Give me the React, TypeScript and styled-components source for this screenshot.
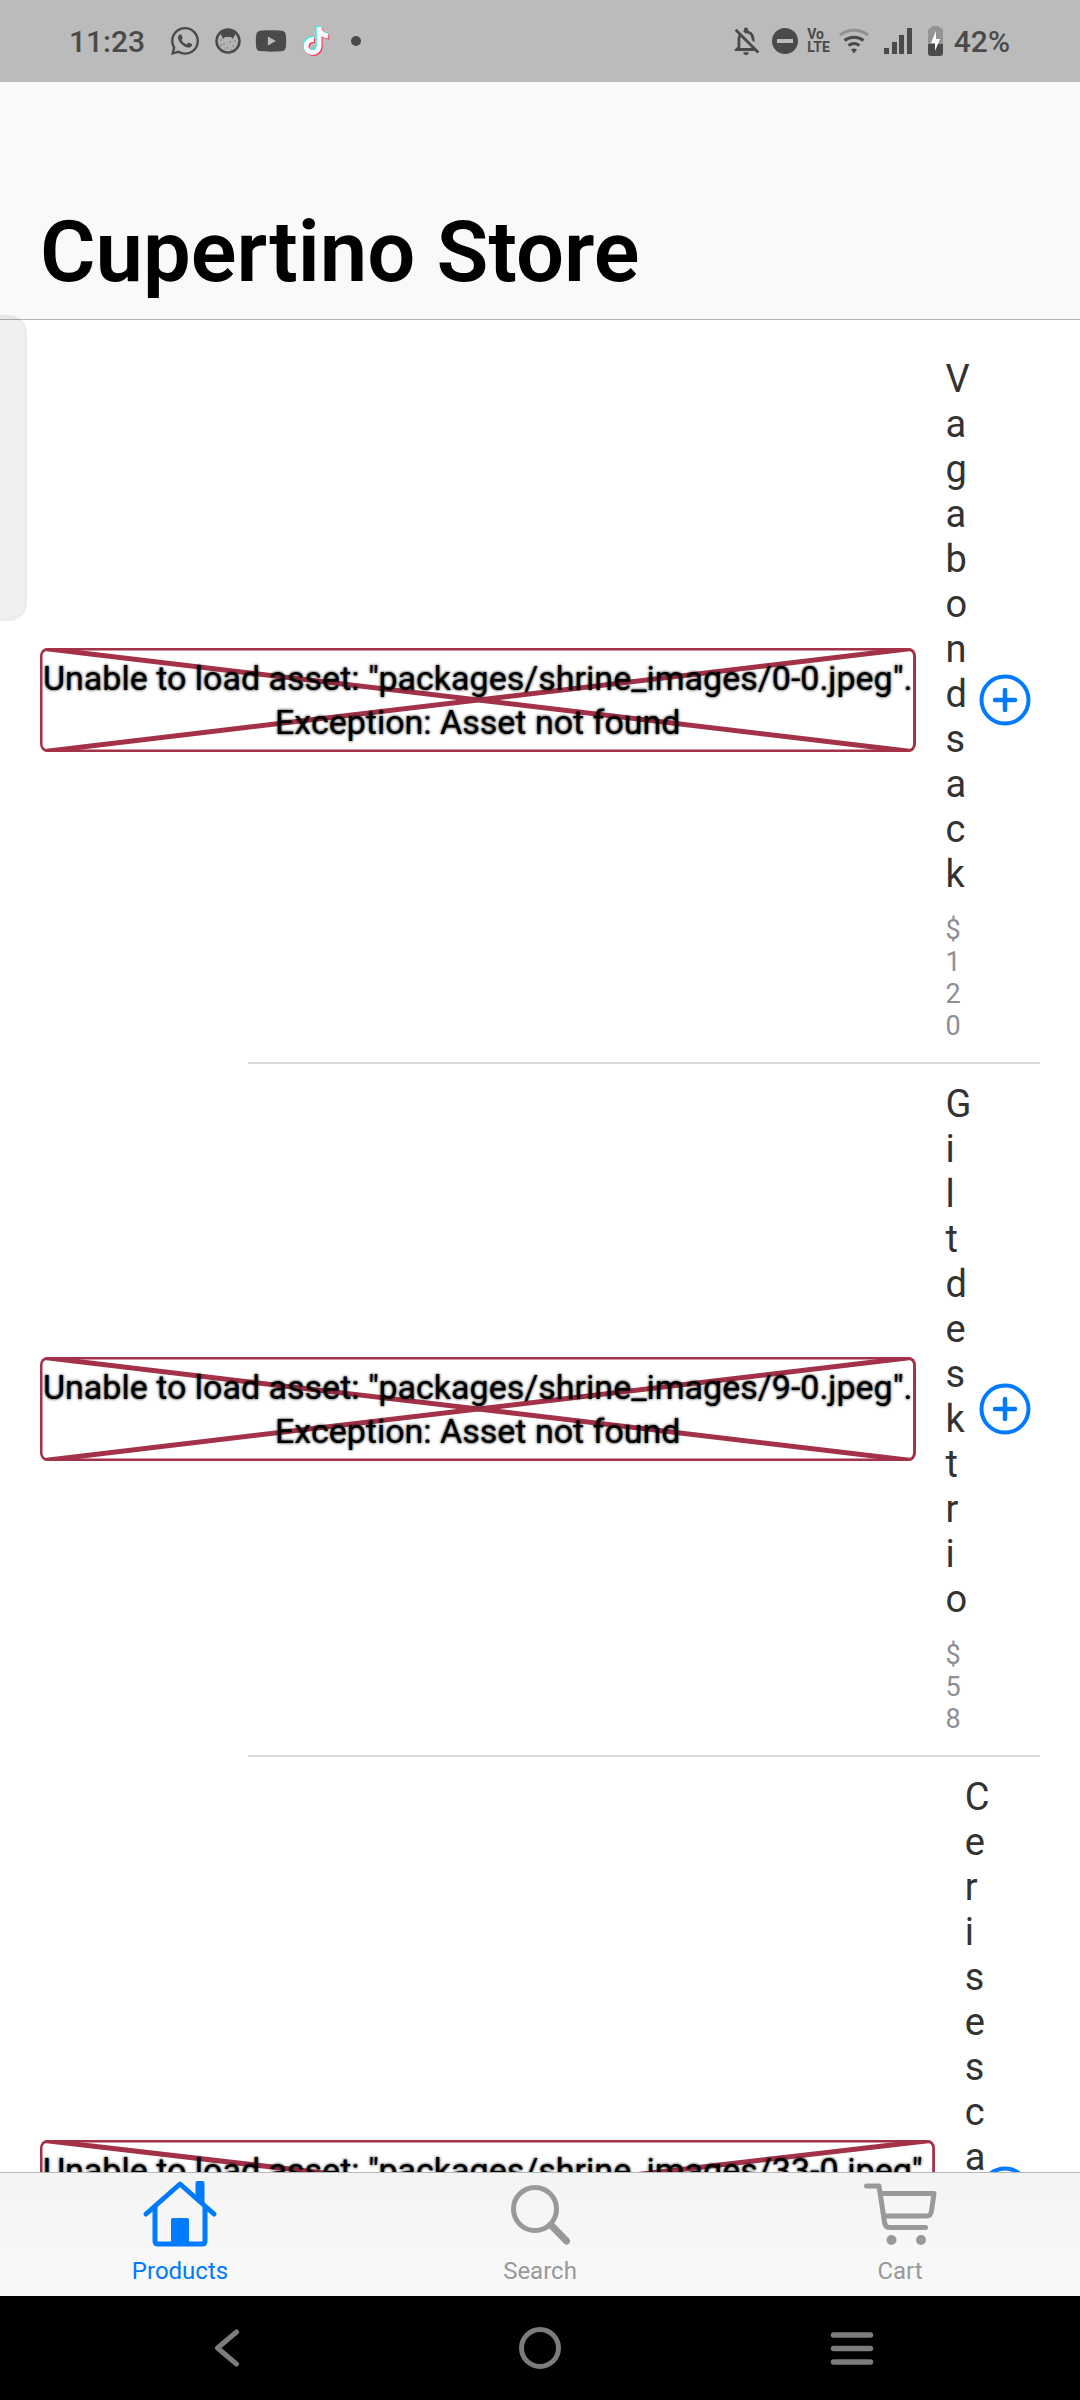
import React from "react";
import styled, { createGlobalStyle } from "styled-components";
import { FaTiktok, FaWhatsapp, FaYoutube } from "react-icons/fa6";
import { MdOutlineNotificationsOff } from "react-icons/md";

const ink = "#4a4a4a";
const blue = "#007aff";
const inactive = "#999999";
const errorRed = "#a33249";

const GlobalStyle = createGlobalStyle`
  * { box-sizing: border-box; }
  body {
    margin: 0;
    background: #ffffff;
    font-family: Roboto, "Noto Sans", sans-serif;
  }
  button {
    border: 0;
    padding: 0;
    background: none;
    font: inherit;
    color: inherit;
  }
  svg { display: block; flex: none; }
`;

const Screen = styled.div`
  position: relative;
  display: flex;
  flex-direction: column;
  height: 100vh;
  overflow: hidden;
`;

const StatusBar = styled.div`
  flex: none;
  display: flex;
  align-items: center;
  justify-content: space-between;
  height: 82px;
  padding: 0 70px 0 69px;
  background: #bbbbbb;
  color: ${ink};
  font-size: 30px;
  font-weight: 500;
`;

const StatusGroup = styled.div<{ $gap: number }>`
  display: flex;
  align-items: center;
  gap: ${(p) => p.$gap}px;
`;

const Clock = styled.span`
  margin-right: 10px;
`;

const Dot = styled.span`
  width: 10px;
  height: 10px;
  margin-left: 8px;
  border-radius: 50%;
  background: ${ink};
`;

const SignalGroup = styled.span`
  display: flex;
  align-items: center;
  gap: 16px;
  margin: 0 2px 0 6px;
`;

const TiktokStack = styled.span`
  position: relative;
  width: 28px;
  height: 30px;
`;

const TiktokLayer = styled(FaTiktok)<{ $shift: number }>`
  position: absolute;
  top: ${(p) => p.$shift}px;
  left: ${(p) => p.$shift}px;
`;

const Volte = styled.span`
  display: flex;
  flex-direction: column;
  font-size: 14px;
  line-height: 13px;
  font-weight: 700;
`;

const Header = styled.header`
  flex: none;
  padding: 120px 40px 17px;
  background: #f9f9f9;
  border-bottom: 1px solid #b2b2b2;
`;

const Title = styled.h1`
  margin: 0;
  font-size: 85px;
  line-height: 100px;
  font-weight: 600;
  color: #000000;
`;

const EdgeHandle = styled.div`
  position: absolute;
  top: 315px;
  left: 0;
  width: 27px;
  height: 306px;
  border: 3px solid rgba(0, 0, 0, 0.02);
  border-left: 0;
  border-radius: 0 18px 18px 0;
  background: rgba(0, 0, 0, 0.06);
`;

const ProductList = styled.ul`
  flex: 1;
  min-height: 0;
  overflow-x: hidden;
  overflow-y: auto;
  scrollbar-width: none;
  margin: 0;
  padding: 19px 40px 0;
  list-style: none;
`;

const Product = styled.li`
  &::after {
    content: "";
    display: block;
    height: 2px;
    margin-left: 208px;
    background: #d9d9d9;
  }
`;

const ProductRow = styled.div`
  display: flex;
  align-items: center;
  padding: 18px 0 20px;
`;

const BrokenImage = styled.div`
  position: relative;
  flex: none;
  padding: 8px 3px;
  border-radius: 8px;
  overflow: hidden;
`;

const Cross = styled.svg`
  position: absolute;
  inset: 0;
  width: 100%;
  height: 100%;
  stroke: ${errorRed};
  stroke-width: 5;
  fill: none;
`;

const ErrorText = styled.p`
  position: relative;
  margin: 0;
  font-size: 34px;
  line-height: 44px;
  text-align: center;
  white-space: pre;
  color: #000000;
  text-shadow: 0 0 3px #000000;
`;

const Details = styled.div`
  flex: 1;
  min-width: 0;
  display: flex;
  flex-direction: column;
  gap: 17px;
  margin-left: 30px;
`;

const Name = styled.h2`
  width: 1px;
  margin: 0;
  font-size: 38px;
  line-height: 45px;
  font-weight: 400;
  color: #333333;
  word-break: break-all;
  overflow-wrap: anywhere;
`;

const Price = styled.span`
  width: 1px;
  font-size: 27px;
  line-height: 32px;
  font-weight: 400;
  color: #8e8e93;
  overflow-wrap: anywhere;
`;

const AddButton = styled.button`
  flex: none;
  display: flex;
  align-items: center;
  justify-content: center;
  width: 70px;
  height: 70px;
  color: ${blue};
`;

const TabBar = styled.nav`
  flex: none;
  display: flex;
  border-top: 1px solid #b8b8b8;
  background: linear-gradient(#f4f4f4, #f9f9f9);
`;

const Tab = styled.button<{ $active?: boolean }>`
  flex: 1;
  display: flex;
  flex-direction: column;
  align-items: center;
  gap: 8px;
  padding: 7px 0 10px;
  font-size: 24px;
  line-height: 30px;
  color: ${(p) => (p.$active ? blue : inactive)};
`;

const SystemBar = styled.nav`
  flex: none;
  display: flex;
  align-items: center;
  justify-content: center;
  gap: 252px;
  height: 104px;
  background: #000000;
  color: #7c7c7c;
`;

const SystemButton = styled.button`
  display: flex;
  justify-content: center;
  width: 60px;
`;

const CatIcon = () => (
  <svg width="26" height="28" viewBox="0 0 26 28">
    <circle cx="13" cy="14" r="11.500" fill="#b4b4b4" stroke={ink} strokeWidth="2.500" />
    <path
      d="M5 6C9 1 17 1 21 6c-1 2-2 3-3 6l-2-2h-6l-2 2C7 9 6 8 5 6z"
      fill={ink}
    />
    <path
      d="M5 13h2M8 17h2M14 15h2M19 14h2M5 18h2M11 21h2M17 19h2M15 23h2M9 23h1"
      stroke="#777777"
      strokeWidth="1"
    />
  </svg>
);

const DndIcon = () => (
  <svg width="26" height="26" viewBox="0 0 26 26">
    <circle cx="13" cy="13" r="13" fill={ink} />
    <rect x="5" y="11" width="16" height="4" fill="#bbbbbb" />
  </svg>
);

const WifiIcon = () => (
  <svg width="30" height="26" viewBox="0 0 30 26" fill="none" strokeWidth="3">
    <path d="M1 7C9 .5 21 .5 29 7" stroke="#909090" />
    <path d="M5.500 12.500c5.500-4.500 13.500-4.500 19 0" stroke={ink} />
    <path d="M9.500 17.500c3.500-2.500 7.500-2.500 11 0" stroke={ink} />
    <path d="M12 21.500c2-1.500 4-1.500 6 0l-3 4z" fill={ink} />
  </svg>
);

const SignalIcon = () => (
  <svg width="28" height="26" viewBox="0 0 28 26" fill={ink}>
    <rect x="0" y="20" width="5" height="6" />
    <rect x="8" y="14" width="5" height="12" />
    <rect x="15" y="7" width="5" height="19" />
    <rect x="23" y="0" width="5" height="26" />
  </svg>
);

const BatteryIcon = () => (
  <svg width="15" height="30" viewBox="0 0 15 30">
    <path d="M3 2a2 2 0 0 1 2-2h5a2 2 0 0 1 2 2a3 3 0 0 1 3 3v13H0V5a3 3 0 0 1 3-3z" fill="#949494" />
    <path d="M0 18h15v9a3 3 0 0 1-3 3H3a3 3 0 0 1-3-3z" fill={ink} />
    <path d="M8 5v8h4L7 25v-8H3z" fill="#ffffff" />
  </svg>
);

const PlusCircle = () => (
  <svg width="52" height="52" viewBox="0 0 52 52" fill="none" stroke="currentColor" strokeWidth="4">
    <circle cx="26" cy="26" r="23.500" />
    <path d="M26 16v20M16 26h20" strokeWidth="4.500" strokeLinecap="round" />
  </svg>
);

const HomeIcon = () => (
  <svg width="76" height="68" viewBox="0 0 76 68" fill="none" stroke="currentColor" strokeWidth="5">
    <path d="M4 34L38 4l34 30" strokeLinecap="round" strokeLinejoin="round" />
    <path d="M13 27v34q0 3 3 3h44q3 0 3-3V27" />
    <path d="M53.500 17V3q0-2 2-2h5q2 0 2 2v21z" fill="currentColor" stroke="none" />
    <path d="M29 65V40q0-2 2-2h14q2 0 2 2v25z" fill="currentColor" stroke="none" />
  </svg>
);

const SearchIcon = () => (
  <svg width="76" height="68" viewBox="0 0 76 68" fill="none" stroke="currentColor" strokeWidth="5">
    <circle cx="33" cy="29" r="21.500" />
    <path d="M49 45l15.500 16" strokeWidth="7" strokeLinecap="round" />
  </svg>
);

const CartIcon = () => (
  <svg
    width="76"
    height="68"
    viewBox="0 0 76 68"
    fill="none"
    stroke="currentColor"
    strokeWidth="5"
    strokeLinecap="round"
    strokeLinejoin="round"
  >
    <path d="M4.500 6H17l5.500 36q.8 5.500 5 5.500H63.500" />
    <path d="M19 13.500h53L69.500 31q-.8 5-4.500 5H22.500" />
    <circle cx="29.500" cy="60" r="5" fill="currentColor" stroke="none" />
    <circle cx="59" cy="60" r="5" fill="currentColor" stroke="none" />
  </svg>
);

const BackIcon = () => (
  <svg width="28" height="42" viewBox="0 0 28 42" fill="none" stroke="currentColor" strokeWidth="5">
    <path d="M22.500 5L3.500 21l19 16" strokeLinecap="round" strokeLinejoin="round" />
  </svg>
);

const CircleIcon = () => (
  <svg width="42" height="42" viewBox="0 0 42 42" fill="none" stroke="currentColor" strokeWidth="5">
    <circle cx="21" cy="21" r="18.500" />
  </svg>
);

const MenuIcon = () => (
  <svg width="44" height="42" viewBox="0 0 44 42" stroke="currentColor" strokeWidth="5.500">
    <path d="M3.500 8h37M3.500 21.500h37M3.500 35h37" strokeLinecap="round" />
  </svg>
);

const products = [
  { name: "Vagabond sack", price: "$120", asset: "0-0" },
  { name: "Gilt desk trio", price: "$58", asset: "9-0" },
  { name: "Cerise scallop tee", price: "$34", asset: "33-0" },
];

function MissingAsset({ asset }: { asset: string }) {
  return (
    <BrokenImage>
      <Cross aria-hidden="true">
        <rect width="100%" height="100%" rx="8" />
        <line x1="0" y1="0" x2="100%" y2="100%" />
        <line x1="100%" y1="0" x2="0" y2="100%" />
      </Cross>
      <ErrorText>
        {`Unable to load asset: "packages/shrine_images/${asset}.jpeg".\nException: Asset not found`}
      </ErrorText>
    </BrokenImage>
  );
}

export default function App() {
  return (
    <Screen>
      <GlobalStyle />
      <StatusBar>
        <StatusGroup $gap={14}>
          <Clock>11:23</Clock>
          <FaWhatsapp size={32} />
          <CatIcon />
          <FaYoutube size={32} />
          <TiktokStack>
            <TiktokLayer size={28} color="#25f4ee" $shift={0} />
            <TiktokLayer size={28} color="#fe2c55" $shift={2} />
            <TiktokLayer size={28} color="#ffffff" $shift={1} />
          </TiktokStack>
          <Dot />
        </StatusGroup>
        <StatusGroup $gap={9}>
          <MdOutlineNotificationsOff size={34} />
          <DndIcon />
          <Volte>
            <span>Vo</span>
            <span>LTE</span>
          </Volte>
          <WifiIcon />
          <SignalGroup>
            <SignalIcon />
            <BatteryIcon />
          </SignalGroup>
          <span>42%</span>
        </StatusGroup>
      </StatusBar>
      <Header>
        <Title>Cupertino Store</Title>
      </Header>
      <ProductList>
        {products.map((p) => (
          <Product key={p.asset}>
            <ProductRow>
              <MissingAsset asset={p.asset} />
              <Details>
                <Name>{p.name}</Name>
                <Price>{p.price}</Price>
              </Details>
              <AddButton aria-label={`Add ${p.name}`}>
                <PlusCircle />
              </AddButton>
            </ProductRow>
          </Product>
        ))}
      </ProductList>
      <TabBar>
        <Tab $active>
          <HomeIcon />
          Products
        </Tab>
        <Tab>
          <SearchIcon />
          Search
        </Tab>
        <Tab>
          <CartIcon />
          Cart
        </Tab>
      </TabBar>
      <SystemBar>
        <SystemButton aria-label="Back">
          <BackIcon />
        </SystemButton>
        <SystemButton aria-label="Home">
          <CircleIcon />
        </SystemButton>
        <SystemButton aria-label="Recent apps">
          <MenuIcon />
        </SystemButton>
      </SystemBar>
      <EdgeHandle />
    </Screen>
  );
}
